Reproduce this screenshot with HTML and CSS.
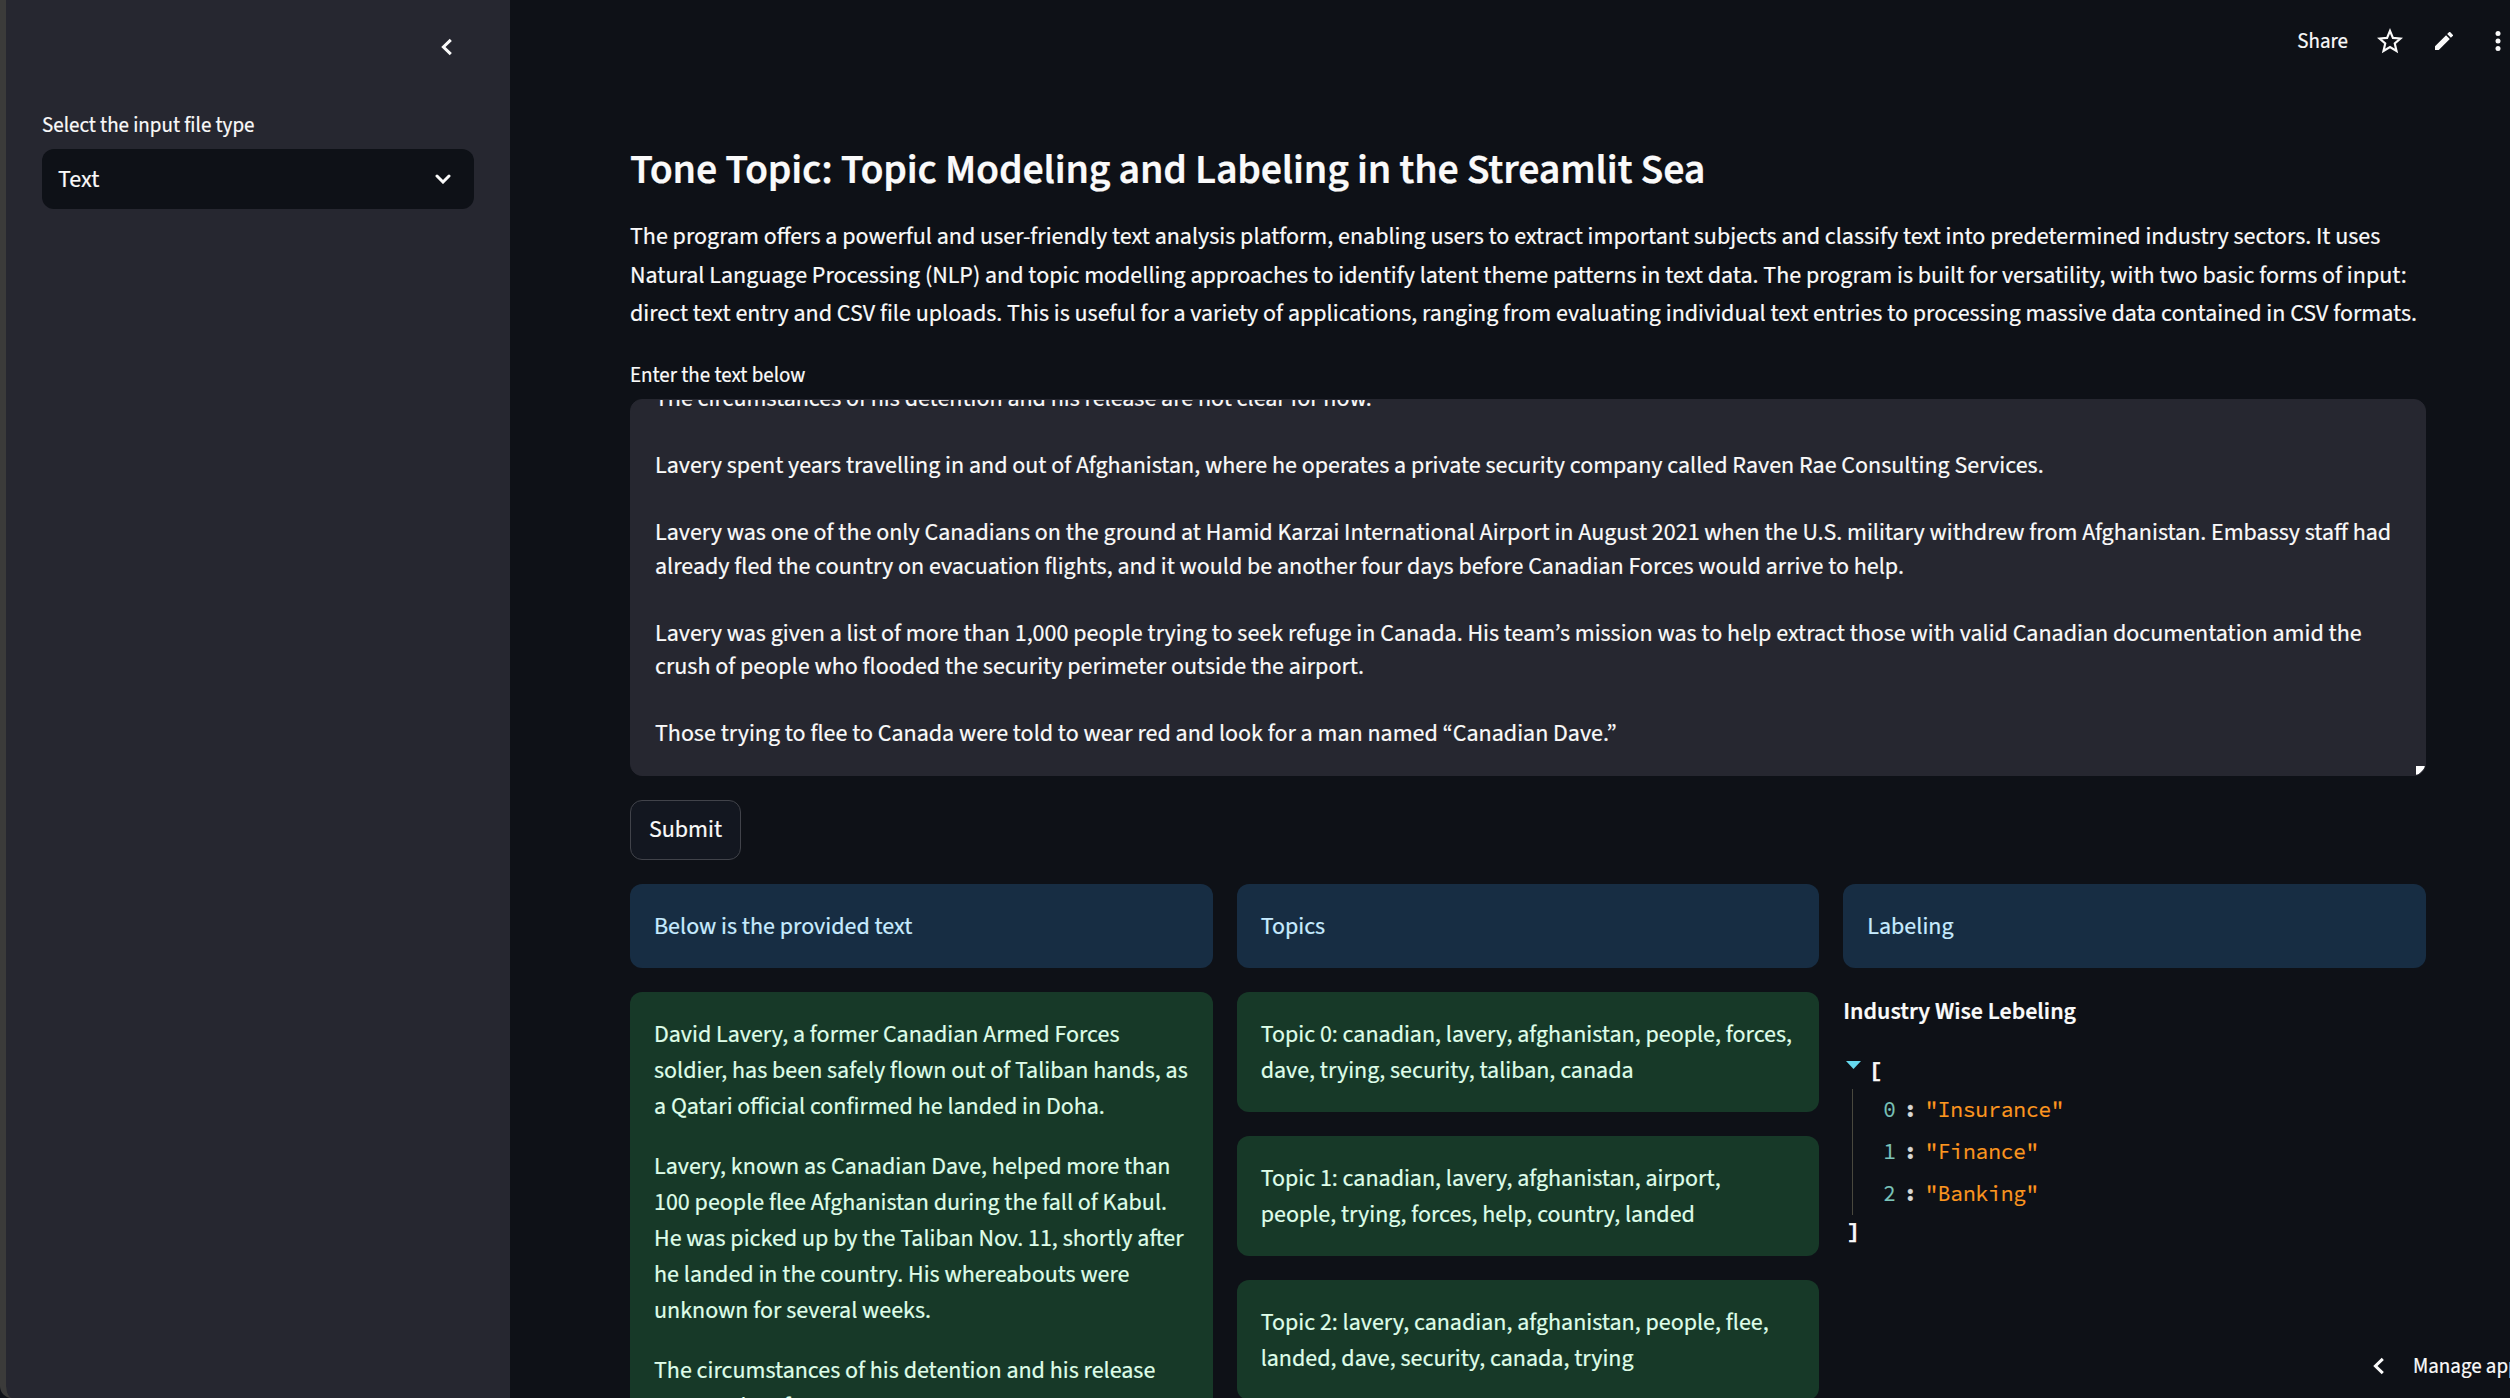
FILE: index.html
```html
<!DOCTYPE html>
<html lang="en">
<head>
<meta charset="utf-8">
<title>Tone Topic</title>
<link rel="stylesheet" href="styles.css">
</head>
<body>
<div class="app">
  <aside class="sidebar">
    <div class="sidebar-head">
      <svg class="collapse" viewBox="0 0 12 18"><path d="M9.8 1.8 2.4 9l7.4 7.2" /></svg>
    </div>
    <label class="label">Select the input file type</label>
    <div class="select">
      <span>Text</span>
      <svg class="caret" viewBox="0 0 16 10"><path d="M2 2l6 6 6-6" /></svg>
    </div>
  </aside>

  <main class="main">
    <h3 class="title">Tone Topic: Topic Modeling and Labeling in the Streamlit Sea</h3>
    <p class="intro">The program offers a powerful and user-friendly text analysis platform, enabling users to extract important subjects and classify text into predetermined industry sectors. It uses<br>Natural Language Processing (NLP) and topic modelling approaches to identify latent theme patterns in text data. The program is built for versatility, with two basic forms of input:<br>direct text entry and CSV file uploads. This is useful for a variety of applications, ranging from evaluating individual text entries to processing massive data contained in CSV formats.</p>
    <label class="label">Enter the text below</label>
    <div class="textarea">
      <div class="textarea-body">The circumstances of his detention and his release are not clear for now.

Lavery spent years travelling in and out of Afghanistan, where he operates a private security company called Raven Rae Consulting Services.

Lavery was one of the only Canadians on the ground at Hamid Karzai International Airport in August 2021 when the U.S. military withdrew from Afghanistan. Embassy staff had
already fled the country on evacuation flights, and it would be another four days before Canadian Forces would arrive to help.

Lavery was given a list of more than 1,000 people trying to seek refuge in Canada. His team’s mission was to help extract those with valid Canadian documentation amid the
crush of people who flooded the security perimeter outside the airport.

Those trying to flee to Canada were told to wear red and look for a man named “Canadian Dave.”</div>
      <svg class="grip" viewBox="0 0 9 9"><path d="M0 0h9v2L2 9H0z" /></svg>
    </div>
    <button class="submit">Submit</button>

    <div class="columns">
      <section class="column">
        <div class="card info">Below is the provided text</div>
        <div class="card success">
          <p>David Lavery, a former Canadian Armed Forces<br>soldier, has been safely flown out of Taliban hands, as<br>a Qatari official confirmed he landed in Doha.</p>
          <p>Lavery, known as Canadian Dave, helped more than<br>100 people flee Afghanistan during the fall of Kabul.<br>He was picked up by the Taliban Nov. 11, shortly after<br>he landed in the country. His whereabouts were<br>unknown for several weeks.</p>
          <p>The circumstances of his detention and his release<br>are not clear for now.</p>
        </div>
      </section>
      <section class="column">
        <div class="card info">Topics</div>
        <div class="card success">Topic 0: canadian, lavery, afghanistan, people, forces,<br>dave, trying, security, taliban, canada</div>
        <div class="card success">Topic 1: canadian, lavery, afghanistan, airport,<br>people, trying, forces, help, country, landed</div>
        <div class="card success">Topic 2: lavery, canadian, afghanistan, people, flee,<br>landed, dave, security, canada, trying</div>
      </section>
      <section class="column">
        <div class="card info">Labeling</div>
        <div class="result">
          <p class="result-title">Industry Wise Lebeling</p>
          <div class="json">
            <div class="json-open"><svg class="tri" viewBox="0 0 15 8"><path d="M0 0h15L7.500 8z" /></svg><b>[</b></div>
            <div class="json-items">
              <div class="json-row"><span class="key">0</span><b>:</b><span class="value">"Insurance"</span></div>
              <div class="json-row"><span class="key">1</span><b>:</b><span class="value">"Finance"</span></div>
              <div class="json-row"><span class="key">2</span><b>:</b><span class="value">"Banking"</span></div>
            </div>
            <div class="json-close"><b>]</b></div>
          </div>
        </div>
      </section>
    </div>
  </main>
</div>

<header class="toolbar">
  <span>Share</span>
  <svg class="star" viewBox="0 0 24 24"><path d="M12 2.600l2.700 6.500 7 .6-5.300 4.600 1.600 6.900-6-3.700-6 3.700 1.600-6.900-5.300-4.600 7-.6z" /></svg>
  <svg class="pencil" viewBox="3 3 18 18"><path d="M3 17.250V21h3.750L17.810 9.940l-3.750-3.750L3 17.250zM20.710 7.040a1 1 0 0 0 0-1.410l-2.340-2.340a1 1 0 0 0-1.410 0l-1.830 1.830 3.750 3.750 1.830-1.830z" /></svg>
  <svg class="dots" viewBox="0 0 6 20"><circle cx="3" cy="2.500" r="2.500" /><circle cx="3" cy="10" r="2.500" /><circle cx="3" cy="17.500" r="2.500" /></svg>
</header>

<footer class="manage">
  <svg class="collapse" viewBox="0 0 12 18"><path d="M9.800 1.800 2.400 9l7.400 7.200" /></svg>
  <span>Manage app</span>
</footer>
</body>
</html>
```
FILE: styles.css
```css
* { box-sizing: border-box; }

html, body { height: 100%; }

body {
  margin: 0;
  overflow: hidden;
  background: #0e1117;
  color: #fafafa;
  font: 24px/1.6 "Source Sans 3", "Source Sans Pro", "Noto Sans CJK JP", "Noto Sans", sans-serif;
  white-space: nowrap;
  -webkit-text-stroke: 0.2px currentColor;
}

p, h3 { margin: 0; }
svg { display: block; flex: none; }

.app {
  display: flex;
  height: 1398px;
  overflow: hidden;
}

/* Sidebar */
.sidebar {
  flex: none;
  width: 510px;
  padding: 0 36px;
  border-left: 6px solid #3b3b3a;
  background: linear-gradient(#262730, #262730) padding-box, #3b3b3a;
  border-bottom-left-radius: 12px;
}

.sidebar-head {
  display: flex;
  justify-content: flex-end;
  height: 108px;
  padding: 38px 21px 0 0;
}

.collapse {
  width: 12px;
  height: 18px;
  fill: none;
  stroke: #fafafa;
  stroke-width: 3;
}

.label {
  display: block;
  font-size: 21px;
  line-height: 34px;
}

.select {
  display: flex;
  align-items: center;
  justify-content: space-between;
  width: 432px;
  height: 60px;
  margin-top: 7px;
  padding: 0 23px 0 16px;
  border-radius: 12px;
  background: #0e1117;
}

.select span { padding-top: 2px; }

.caret {
  width: 16px;
  height: 10px;
  fill: none;
  stroke: #fafafa;
  stroke-width: 3;
  stroke-linecap: round;
}

/* Main column */
.main {
  width: 1916px;
  padding: 144px 0 0 120px;
}

.title {
  height: 74.4px;
  font-size: 42px;
  font-weight: 600;
  letter-spacing: -0.005em;
  line-height: 52px;
}

.intro { margin-bottom: 24.6px; }

.textarea {
  position: relative;
  height: 377px;
  margin: 7px 0 24px;
  border: 1px solid #262730;
  border-radius: 12px;
  background: #262730;
  overflow: hidden;
}

.textarea-body {
  margin-top: -18px;
  padding-left: 24px;
  line-height: 33.5px;
  white-space: pre;
}

.grip {
  position: absolute;
  right: 0;
  bottom: 0;
  width: 9px;
  height: 9px;
  fill: #fff;
}

.submit {
  display: block;
  width: 111px;
  height: 60px;
  margin: 0 0 24px;
  padding: 0;
  border: 1px solid #41434a;
  border-radius: 12px;
  background: #131720;
  color: #fafafa;
  font: inherit;
  line-height: 38px;
}

.columns {
  display: grid;
  grid-template-columns: repeat(3, 1fr);
  gap: 24px;
}

.column {
  display: flex;
  flex-direction: column;
  gap: 24px;
}

.card {
  padding: 25px 24px 23px;
  border-radius: 12px;
  line-height: 36px;
}

.card p + p { margin-top: 24px; }
.info { background: #172d43; color: #c7ebff; }
.success { background: #173928; color: #dffde9; }

.result-title {
  padding-top: 1px;
  font-weight: 600;
}

/* JSON tree */
.json {
  padding: 26px 0 0 3px;
  font-family: "Source Code Pro", "Noto Sans Mono", "DejaVu Sans Mono", monospace;
  font-size: 21px;
  line-height: 30px;
}

.json-open {
  display: flex;
  gap: 8px;
  height: 31px;
  line-height: 26px;
}

.json-open b, .json-close b { -webkit-text-stroke-width: 0.6px; }

.tri {
  width: 15px;
  height: 8px;
  margin-top: 3px;
  fill: #66d9ef;
}

.json-items {
  margin-left: 6px;
  padding-left: 30px;
  border-left: 1px solid #49483e;
}

.json-row {
  display: flex;
  height: 42.3px;
  line-height: 41px;
}

.json-row b { margin: 0 8.6px 0 8px; color: #d8d8d4; }
.key { color: #7cc5bb; }
.value { color: #fd971f; }
.json-close { padding-left: 1px; line-height: 34px; }

/* Floating controls */
.toolbar {
  position: absolute;
  top: 24px;
  right: 9px;
  display: flex;
  align-items: center;
  height: 34px;
  font-size: 21px;
  line-height: 34px;
}

.star {
  width: 26px;
  height: 26px;
  margin-left: 29px;
  fill: none;
  stroke: #fafafa;
  stroke-width: 2;
}

.pencil {
  width: 18px;
  height: 18px;
  margin-left: 32px;
  fill: #fafafa;
}

.dots {
  width: 6px;
  height: 20px;
  margin-left: 42px;
  fill: #fafafa;
}

.manage {
  position: absolute;
  left: 2373px;
  bottom: 15px;
  display: flex;
  align-items: center;
  gap: 28px;
  font-size: 21px;
  line-height: 34px;
}
```
